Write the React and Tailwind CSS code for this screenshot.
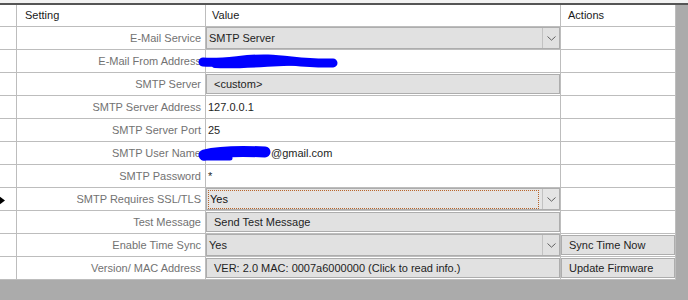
import React from 'react';

const rows = [
    { label: 'E-Mail Service', kind: 'combo', value: 'SMTP Server' },
    { label: 'E-Mail From Address', kind: 'text', value: '' },
    { label: 'SMTP Server', kind: 'button', value: '<custom>' },
    { label: 'SMTP Server Address', kind: 'text', value: '127.0.0.1' },
    { label: 'SMTP Server Port', kind: 'text', value: '25' },
    { label: 'SMTP User Name', kind: 'email', value: '@gmail.com' },
    { label: 'SMTP Password', kind: 'text', value: '*' },
    { label: 'SMTP Requires SSL/TLS', kind: 'focus', value: 'Yes', current: true },
    { label: 'Test Message', kind: 'button', value: 'Send Test Message' },
    { label: 'Enable Time Sync', kind: 'combo', value: 'Yes', action: 'Sync Time Now' },
    { label: 'Version/ MAC Address', kind: 'button', value: 'VER: 2.0 MAC: 0007a6000000 (Click to read info.)', action: 'Update Firmware' },
];

const Chevron = () => (
    <svg width="9" height="5" viewBox="0 0 9 5">
        <path d="M0.5 0.5 L4.5 4.2 L8.5 0.5" fill="none" stroke="#606060" strokeWidth="1" />
    </svg>
);

const DropButton = () => (
    <div className="w-[17px] h-full border-l border-[#c2c2c2] flex items-center justify-center">
        <Chevron />
    </div>
);

const Button = ({ children }) => (
    <div className="h-full w-full py-[1px]">
        <div className="h-full w-full border border-[#adadad] bg-[#e1e1e1] flex items-center pl-[7px] text-[#1e1e1e] whitespace-nowrap overflow-hidden">
            {children}
        </div>
    </div>
);

const ValueCell = ({ row }) => {
    if (row.kind === 'combo') return (
        <div className="h-full w-full border border-[#adadad] bg-[#e1e1e1] flex items-center">
            <span className="flex-1 pl-[2px] text-[#1e1e1e]">{row.value}</span>
            <DropButton />
        </div>
    );

    if (row.kind === 'focus') return (
        <div className="h-full w-full border border-[#adadad] bg-[#e5e5e5] flex items-center">
            <div className="flex-1 h-[19px] mx-[1px] mr-[3px] border border-dotted border-[#b8642a] flex items-center pl-[1px] text-[#111]">
                {row.value}
            </div>
            <DropButton />
        </div>
    );

    if (row.kind === 'button') return <Button>{row.value}</Button>;

    if (row.kind === 'email') return (
        <div className="h-full flex items-center pl-[65px] text-[#1e1e1e]">{row.value}</div>
    );

    return <div className="h-full flex items-center pl-[2px] text-[#1e1e1e]">{row.value}</div>;
};

const App = () => {
    return (
        <div
            className="relative w-[688px] h-[300px] bg-[#ababab] overflow-hidden text-[11px] leading-none"
            style={{ fontFamily: '"Liberation Sans", Arial, sans-serif' }}
        >
            <div className="h-[3px] bg-[#f2f2f2]"></div>
            <div className="h-[2px] bg-[#555555]"></div>

            <div className="w-[676px]">
                <div className="flex h-[22px] bg-white border-b border-[#bdbdbd] text-[#1a1a1a]">
                    <div className="w-[17px] border-r border-[#bdbdbd]"></div>
                    <div className="w-[189px] border-r border-[#bdbdbd] flex items-center pl-[8px]">Setting</div>
                    <div className="w-[355px] border-r border-[#bdbdbd] flex items-center pl-[6px]">Value</div>
                    <div className="w-[115px] border-r border-[#bdbdbd] flex items-center pl-[7px]">Actions</div>
                </div>

                {rows.map(row => (
                    <div key={row.label} className="flex h-[23px] bg-white border-b border-[#bdbdbd]">
                        <div className="w-[17px] border-r border-[#bdbdbd] flex items-center">
                            {row.current && (
                                <svg width="7" height="9" viewBox="0 0 7 9" className="-ml-[1px] mt-[2px]">
                                    <polygon points="0,0 6,4.5 0,9" fill="#000" />
                                </svg>
                            )}
                        </div>
                        <div className="w-[189px] border-r border-[#bdbdbd] flex items-center justify-end pr-[4px] text-[#727272] whitespace-nowrap">
                            {row.label}
                        </div>
                        <div className="w-[355px] border-r border-[#bdbdbd]">
                            <ValueCell row={row} />
                        </div>
                        <div className="w-[115px] border-r border-[#bdbdbd]">
                            {row.action && <Button>{row.action}</Button>}
                        </div>
                    </div>
                ))}
            </div>

            {/* blue redaction scribbles */}
            <svg className="absolute inset-0 pointer-events-none" width="688" height="300">
                <path d="M203 62 C 225 64, 245 58, 268 59 S 305 64, 333 63" fill="none" stroke="#0000ff" strokeWidth="9" strokeLinecap="round" />
                <path d="M215 65 C 245 67, 285 61, 331 62" fill="none" stroke="#0000ff" strokeWidth="6" strokeLinecap="round" />
                <path d="M204 155 C 220 151, 245 151, 265 152" fill="none" stroke="#0000ff" strokeWidth="11" strokeLinecap="round" />
                <path d="M203 158 L 230 158" fill="none" stroke="#0000ff" strokeWidth="5" strokeLinecap="round" />
            </svg>
        </div>
    );
};

export default App;
